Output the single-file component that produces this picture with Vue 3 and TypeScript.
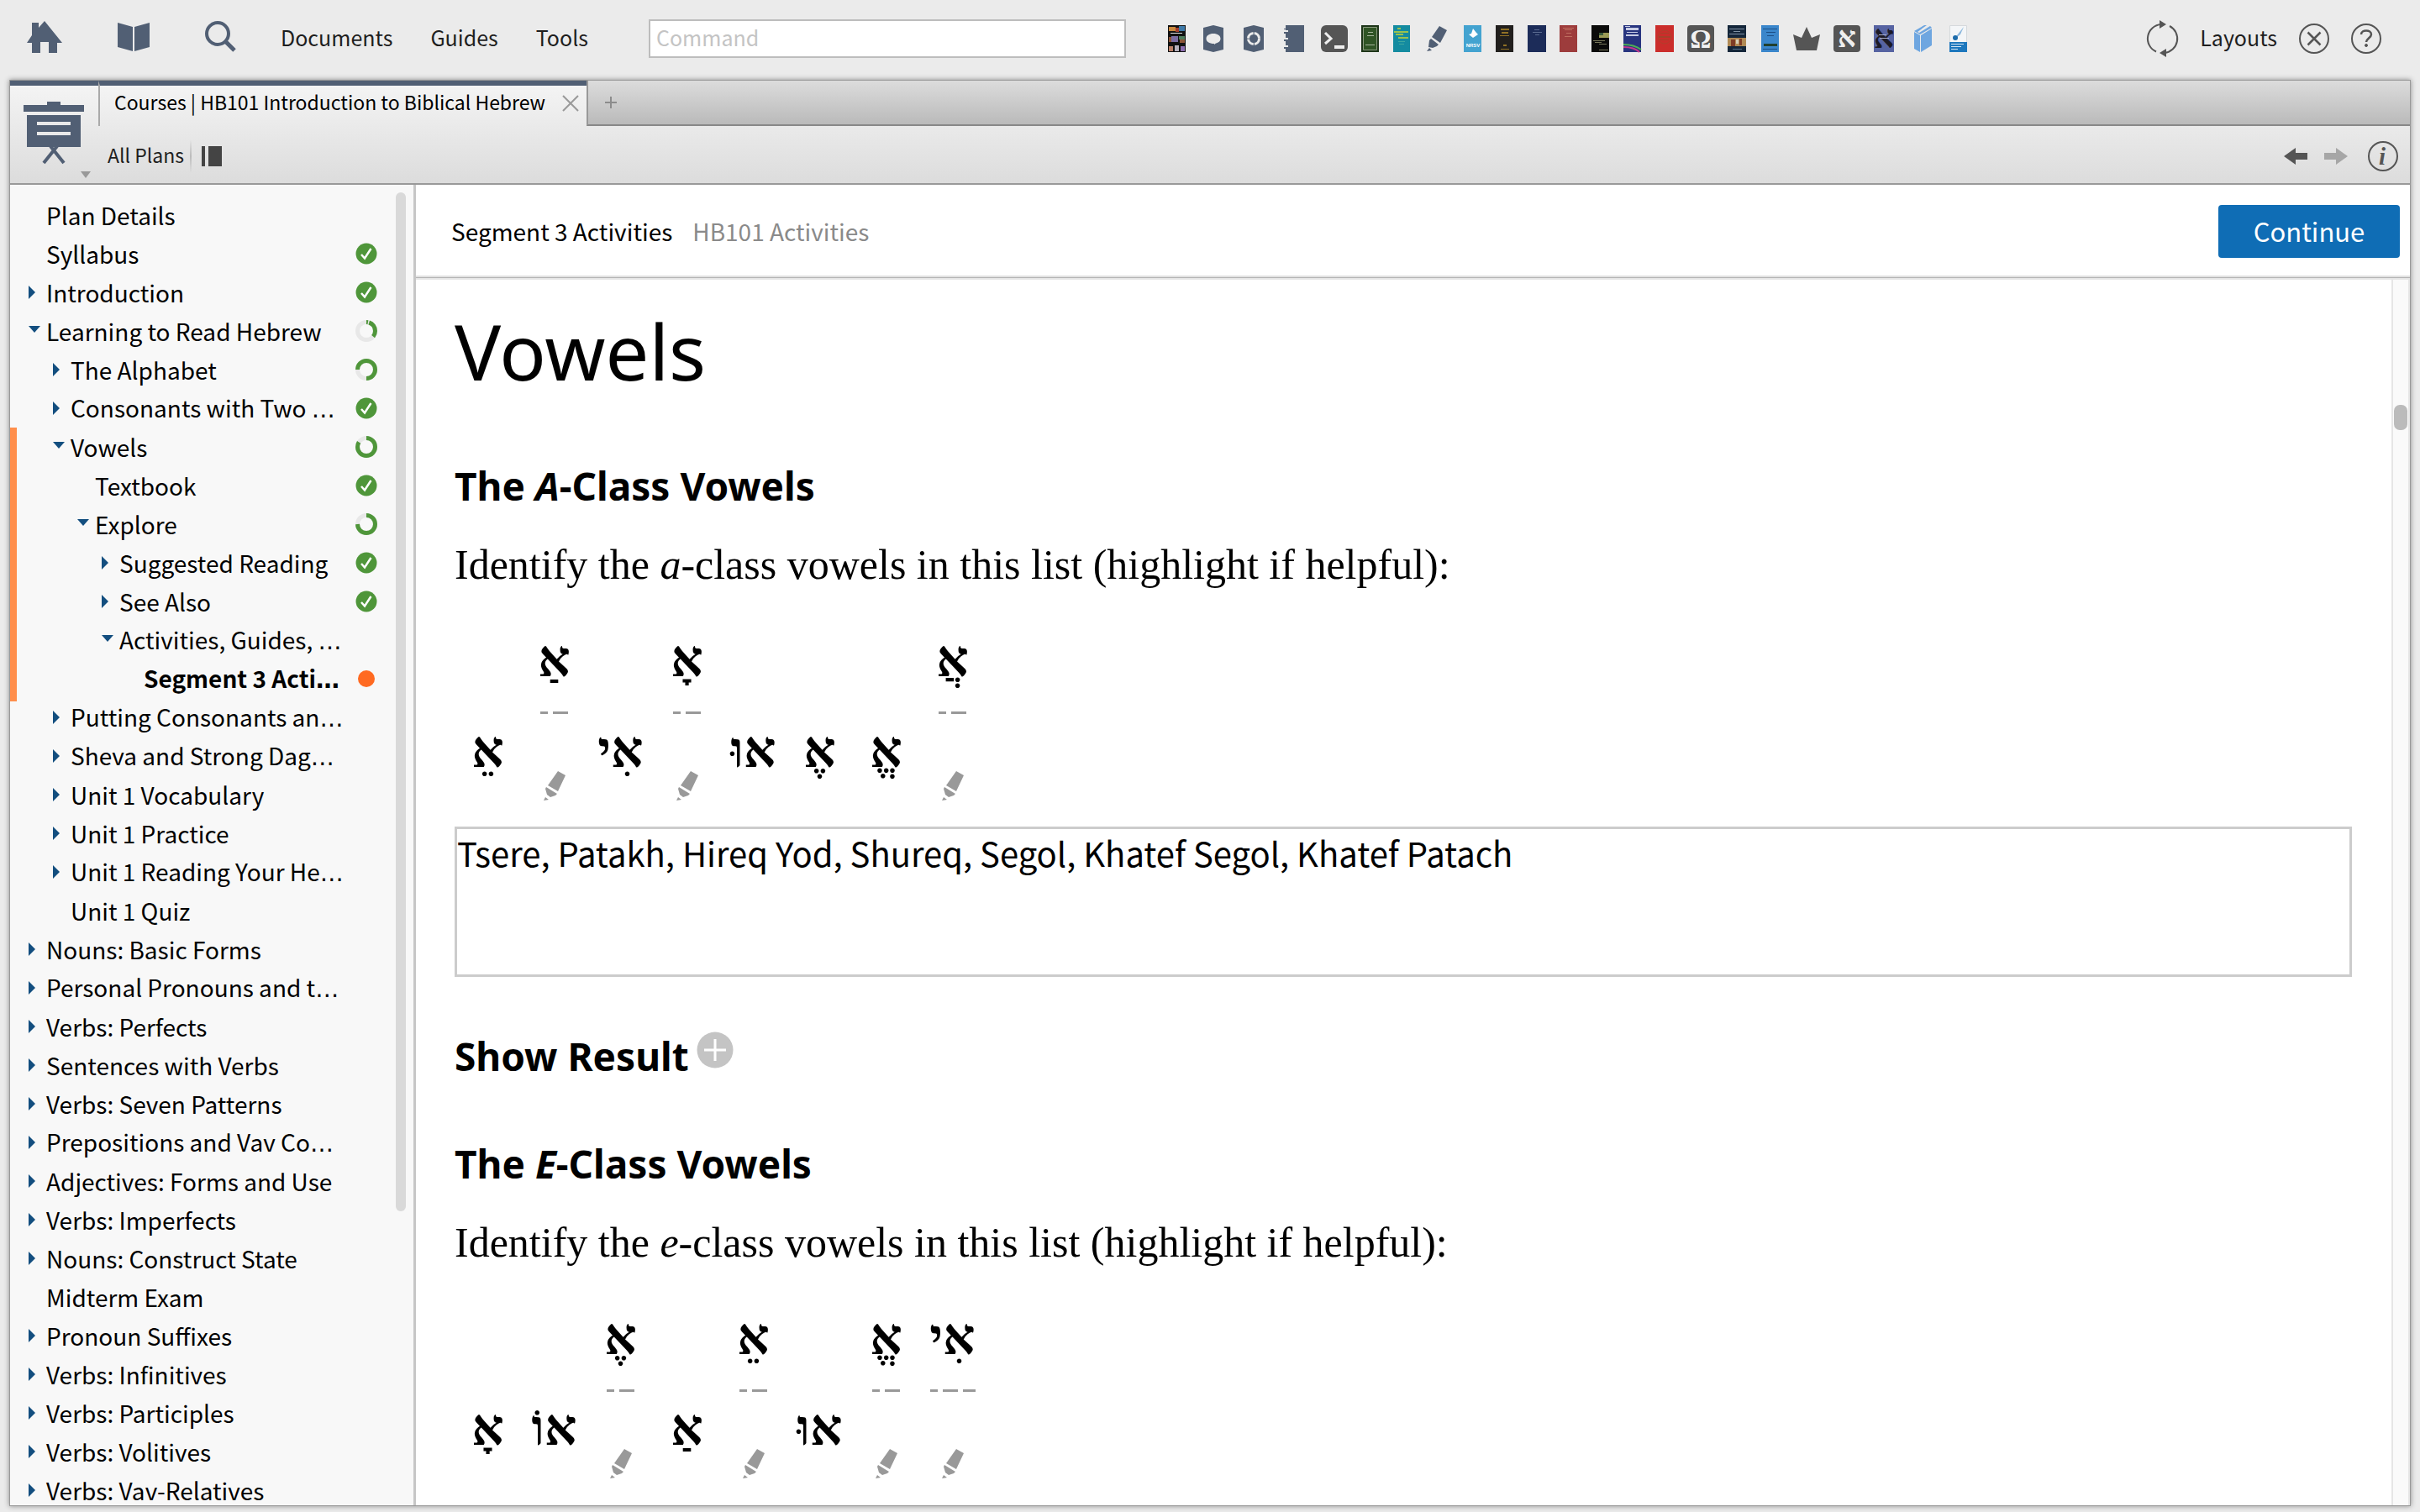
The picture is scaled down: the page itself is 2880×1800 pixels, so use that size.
<script setup lang="ts">
import { ref } from 'vue'

type Status = 'done' | 'ring' | 'current' | ''

interface PlanItem {
  label: string
  depth: number
  arrow?: 'open' | 'closed'
  status?: Status
  arcs?: [number, number][]
  cut?: boolean
  branch?: boolean
}

interface Vowel {
  text: string
  marked?: boolean
  dashes?: number[]
}

const command = ref('')
const answer = ref('Tsere, Patakh, Hireq Yod, Shureq, Segol, Khatef Segol, Khatef Patach')

const plan: PlanItem[] = [
  { label: 'Plan Details', depth: 0 },
  { label: 'Syllabus', depth: 0, status: 'done' },
  { label: 'Introduction', depth: 0, arrow: 'closed', status: 'done' },
  { label: 'Learning to Read Hebrew', depth: 0, arrow: 'open', status: 'ring', arcs: [[0, 3], [5, 31]] },
  { label: 'The Alphabet', depth: 1, arrow: 'closed', status: 'ring', arcs: [[0, 50], [75, 25]] },
  { label: 'Consonants with Two ', depth: 1, arrow: 'closed', status: 'done', cut: true },
  { label: 'Vowels', depth: 1, arrow: 'open', status: 'ring', arcs: [[0, 84]], branch: true },
  { label: 'Textbook', depth: 2, status: 'done', branch: true },
  { label: 'Explore', depth: 2, arrow: 'open', status: 'ring', arcs: [[0, 75]], branch: true },
  { label: 'Suggested Reading', depth: 3, arrow: 'closed', status: 'done', branch: true },
  { label: 'See Also', depth: 3, arrow: 'closed', status: 'done', branch: true },
  { label: 'Activities, Guides, ', depth: 3, arrow: 'open', cut: true, branch: true },
  { label: 'Segment 3 Acti', depth: 4, status: 'current', cut: true, branch: true },
  { label: 'Putting Consonants an', depth: 1, arrow: 'closed', cut: true },
  { label: 'Sheva and Strong Dag', depth: 1, arrow: 'closed', cut: true },
  { label: 'Unit 1 Vocabulary', depth: 1, arrow: 'closed' },
  { label: 'Unit 1 Practice', depth: 1, arrow: 'closed' },
  { label: 'Unit 1 Reading Your He', depth: 1, arrow: 'closed', cut: true },
  { label: 'Unit 1 Quiz', depth: 1 },
  { label: 'Nouns: Basic Forms', depth: 0, arrow: 'closed' },
  { label: 'Personal Pronouns and t', depth: 0, arrow: 'closed', cut: true },
  { label: 'Verbs: Perfects', depth: 0, arrow: 'closed' },
  { label: 'Sentences with Verbs', depth: 0, arrow: 'closed' },
  { label: 'Verbs: Seven Patterns', depth: 0, arrow: 'closed' },
  { label: 'Prepositions and Vav Co', depth: 0, arrow: 'closed', cut: true },
  { label: 'Adjectives: Forms and Use', depth: 0, arrow: 'closed' },
  { label: 'Verbs: Imperfects', depth: 0, arrow: 'closed' },
  { label: 'Nouns: Construct State', depth: 0, arrow: 'closed' },
  { label: 'Midterm Exam', depth: 0 },
  { label: 'Pronoun Suffixes', depth: 0, arrow: 'closed' },
  { label: 'Verbs: Infinitives', depth: 0, arrow: 'closed' },
  { label: 'Verbs: Participles', depth: 0, arrow: 'closed' },
  { label: 'Verbs: Volitives', depth: 0, arrow: 'closed' },
  { label: 'Verbs: Vav-Relatives', depth: 0, arrow: 'closed' },
]

const aVowels: Vowel[] = [
  { text: '\u05D0\u05B5' },
  { text: '\u05D0\u05B7', marked: true, dashes: [9, 18] },
  { text: '\u05D0\u05B4\u05D9' },
  { text: '\u05D0\u05B8', marked: true, dashes: [9, 18] },
  { text: '\u05D0\u05D5\u05BC' },
  { text: '\u05D0\u05B6' },
  { text: '\u05D0\u05B1' },
  { text: '\u05D0\u05B2', marked: true, dashes: [9, 18] },
]

const eVowels: Vowel[] = [
  { text: '\u05D0\u05B8' },
  { text: '\u05D0\u05D5\u05B9' },
  { text: '\u05D0\u05B6', marked: true, dashes: [9, 18] },
  { text: '\u05D0\u05B7' },
  { text: '\u05D0\u05B5', marked: true, dashes: [9, 18] },
  { text: '\u05D0\u05D5\u05BC' },
  { text: '\u05D0\u05B1', marked: true, dashes: [9, 18] },
  { text: '\u05D0\u05B4\u05D9', marked: true, dashes: [9, 18, 15] },
]

const sections = [
  { letter: 'A', lower: 'a', vowels: aVowels, exercise: true },
  { letter: 'E', lower: 'e', vowels: eVowels, exercise: false },
]
</script>

<template>
  <div class="app">
    <header class="topbar">
      <div class="main-icons">
        <button class="plain" aria-label="Home">
          <svg width="42" height="38" viewBox="0 0 42 38"><path fill="#515f74" d="M0 26 6 17V2h8v6l7-8 21 26h-6v12H26V25H16v13H6V26z" /></svg>
        </button>
        <button class="plain" aria-label="Library">
          <svg width="38" height="34" viewBox="0 0 38 34"><path fill="#515f74" d="M0 0 18 5V34L0 29zM20 5 38 0V29L20 34z" /></svg>
        </button>
        <button class="plain" aria-label="Search">
          <svg width="38" height="38" viewBox="0 0 38 38" fill="none" stroke="#515f74"><circle cx="15" cy="15" r="13" stroke-width="4" /><path d="M24 24 35 35" stroke-width="5" /></svg>
        </button>
      </div>
      <nav class="menus">
        <a href="#">Documents</a>
        <a href="#">Guides</a>
        <a href="#">Tools</a>
      </nav>
      <input v-model="command" class="command" type="text" placeholder="Command" aria-label="Command" />
      <div class="shortcuts">
        <svg width="22" height="32" viewBox="0 0 22 32">
          <path fill="#111" d="M0 0h21v32H0z" /><path fill="#c9893e" d="M1 2h8v5H1z" /><path fill="#3d79a8" d="M13 1h7v6h-7z" /><path fill="#a33c2c" d="M9 3h4v5H9z" />
          <path fill="#ddd" d="M3 9h14v1H3z" /><path fill="#7a6ca2" d="M4 13h8v7H4z" /><path fill="#4f7d5c" d="M13 13h7v4h-7z" /><path fill="#8d5436" d="M14 17h6v4h-6zM1 14h3v6H1z" />
          <path fill="#bb8068" d="M1 25h5v6H1z" /><path fill="#b6b1bd" d="M8 24h5v7H8z" /><path fill="#8d6db0" d="M15 25h5v6h-5z" />
        </svg>
        <svg width="32" height="32" viewBox="0 0 32 32"><path fill="#515f74" d="M4 3 16 0 28 3V29L16 32 4 29z" /><path fill="#ebebeb" d="M16 10c5 0 8.500 2.500 8.500 6 0 3-2.500 5-5.500 5.500L17 23v-1C11 22 7.500 19.500 7.500 16S11 10 16 10z" /></svg>
        <svg width="32" height="32" viewBox="0 0 32 32"><path fill="#515f74" d="M4 3 16 0 28 3V29L16 32 4 29z" /><circle cx="16" cy="16" r="6.500" fill="none" stroke="#ebebeb" stroke-width="3" stroke-dasharray="9 1.200" /></svg>
        <svg width="32" height="32" viewBox="0 0 32 32"><path fill="#515f74" d="M6 0h22v32H6v-4H4v-2h5v-2H6v-5H4v-2h5v-2H6v-5H4V8h5V6H6V5H4V4h2z" /></svg>
        <svg width="32" height="32" viewBox="0 0 32 32"><rect width="32" height="32" rx="6" fill="#555" /><path d="M5 9l7 7-7 6" fill="none" stroke="#eee" stroke-width="3" /><path fill="#eee" d="M16 24h12v4H16z" /></svg>
        <svg width="22" height="32" viewBox="0 0 22 32"><path fill="#1d3518" d="M0 0h21v32H0z" /><path fill="#2f5424" stroke="#8a9b7e" d="M2.500 2.500h16v27h-16z" /><path fill="#a5b59b" d="M8 8h6v1H8zM7 12h8v1H7zM5 23h11v1H5z" /></svg>
        <svg width="22" height="32" viewBox="0 0 22 32"><path fill="#148ba0" d="M0 0h20v32H0z" /><path fill="#9bc24d" d="M5 3h4v2H5zM1 7h17v2H1zM3 10h9v2H3zM6 14h12v2H6z" /><path fill="#3fa9a0" d="M6 19h8v1H6zM7 22h6v1H7z" /></svg>
        <svg width="30" height="32" viewBox="0 0 30 32"><path fill="#515f74" d="M17 1 26 6 18 21 8 14zM7 16 16 23 14 25 9 27 4 26 5 18zM5 27 8 30 2 31z" /></svg>
        <svg width="22" height="32" viewBox="0 0 22 32"><path fill="#43a3d0" d="M0 0h21v32H0z" /><path fill="#fff" d="M11 4l4 5 2 2-6 4-5-4 3-1z" /><text x="11" y="26" text-anchor="middle" font-family="Liberation Sans, sans-serif" font-weight="700" font-size="6" fill="#fff">NRSV</text></svg>
        <svg width="22" height="32" viewBox="0 0 22 32"><path fill="#211f1d" d="M0 0h21v32H0z" /><path fill="#907125" d="M6 4h10v2H6zM7 8h8v2H7zM5 12h11v1H5zM9 23h4v2H9zM6 28h10v1H6z" /></svg>
        <svg width="22" height="32" viewBox="0 0 22 32"><path fill="#1c2c59" d="M0 0h22v32H0z" /><path fill="#5a6b90" d="M8 5h6v1H8zM6 8h11v1H6zM9 11h5v1H9z" /></svg>
        <svg width="22" height="32" viewBox="0 0 22 32"><path fill="#9d3c3c" d="M0 0h21v32H0z" /><path fill="#bf6d5f" d="M4 3h13v1H4zM6 5h9v1H6zM8 9h6v1H8zM6 13h9v1H6z" /></svg>
        <svg width="22" height="32" viewBox="0 0 22 32"><path fill="#0b0b0a" d="M0 0h21v32H0z" /><path fill="#9b9a55" d="M9 9h12v6H9z" /><path fill="#3c5a3a" d="M9 9h5v3H9z" /><path fill="#77775a" d="M2 18h14v1H2zM4 20h8v1H4zM9 22h9v1H9zM9 29h11v1H9z" /></svg>
        <svg width="22" height="32" viewBox="0 0 22 32"><path fill="#27347f" d="M0 0h21v32H0z" /><path fill="#c6cbe4" d="M3 3h15v3H3zM4 8h13v1H4zM3 11h15v2H3zM2 1h6v1H2z" /><path fill="none" stroke="#4fae54" stroke-width="2" d="M0 23c7 0 14 1 21 6" /><path fill="none" stroke="#c3378f" stroke-width="2" d="M0 26c7 0 14 1 19 6" /></svg>
        <svg width="22" height="32" viewBox="0 0 22 32"><path fill="#cb2d2b" d="M0 0h22v32H0z" /><circle cx="11" cy="14" r="8" fill="none" stroke="#b0402c" /><path fill="#a8402a" d="M6 9h10v1H6zM4 13h14v2H4zM5 17h11v1H5z" /></svg>
        <svg width="32" height="32" viewBox="0 0 32 32"><rect width="32" height="32" rx="4" fill="#555" /><text x="16" y="27" text-anchor="middle" font-family="Liberation Serif, serif" font-weight="700" font-size="31" fill="#f2f2f2">Ω</text></svg>
        <svg width="24" height="32" viewBox="0 0 24 32"><path fill="#14263a" d="M0 0h22v32H0z" /><path fill="#7f92a5" d="M2 4h18v1H2zM7 7h8v1H7zM2 10h18v1H2z" /><path fill="#b08a55" d="M0 15h22v10H0z" /><path fill="#7e3d26" d="M4 17h5v8H4zM14 16h3v8h-3z" /><path fill="#d8cfb9" d="M10 17h3v5h-3z" /><path fill="#56708a" d="M6 28h11v1H6z" /></svg>
        <svg width="22" height="32" viewBox="0 0 22 32"><path fill="#3a86cb" d="M0 0h21v32H0z" /><path fill="#1c4f86" d="M2 4h17v1H2zM6 8h11v1H6zM7 12h8v1H7zM2 28h17v1H2z" /><path fill="#22402f" d="M3 22h16v3H3z" /></svg>
        <svg width="32" height="32" viewBox="0 0 32 32"><path fill="#555" d="M4 30 0 11 10 15 16 2 22 15 32 11 28 30z" /></svg>
        <svg width="32" height="32" viewBox="0 0 32 32"><rect width="32" height="32" rx="4" fill="#555" /><text x="16" y="26" text-anchor="middle" font-family="Liberation Serif, serif" font-weight="700" font-size="34" fill="#eee">א</text></svg>
        <svg width="24" height="32" viewBox="0 0 24 32"><path fill="#5663a2" d="M0 0h24v32H0z" /><text x="12" y="27" text-anchor="middle" font-family="Liberation Serif, serif" font-weight="700" font-size="38" fill="#1c1a26">א</text><path fill="#a9aecb" d="M6 11h9v1H6zM7 15h11v1H7z" /></svg>
        <svg width="34" height="32" viewBox="0 0 34 32"><path fill="#6ea6e0" d="M8 8 15 12V32L8 28zM16 12 29 4V24L16 32zM8 7 20 0h3L12 8 14 9 27 1 29 3 15 11z" /></svg>
        <svg width="22" height="32" viewBox="0 0 22 32"><path fill="#f4f6f8" stroke="#d5d9dc" d="M.5.5h20v31H.5z" /><path fill="#8cb7dd" d="M17 2 9 12 8 15 13 11z" /><circle cx="7" cy="15" r="3" fill="#1d6cab" /><path fill="#1d77bd" d="M0 20h21v12H0z" /><path fill="#cfe3f2" d="M2 22h15v1H2zM2 25h12v1H2zM2 28h8v1H2z" /></svg>
      </div>
      <div class="right-tools">
        <button class="plain" aria-label="Sync">
          <svg width="36" height="44" viewBox="0 0 36 44"><path d="M10 37.500A17 17 0 0 1 16 5M26 7A17 17 0 0 1 20 39" fill="none" stroke="#555" stroke-width="2" /><path fill="#555" d="M14 0 22 5 14 10zM22 34 14 39 22 44z" /></svg>
        </button>
        <a href="#" class="layouts">Layouts</a>
        <button class="plain" aria-label="Close all">
          <svg width="36" height="36" viewBox="0 0 36 36" fill="none" stroke="#555"><circle cx="18" cy="18" r="17" stroke-width="2" /><path d="M10.500 10.500 25.500 25.500M25.500 10.500 10.500 25.500" stroke-width="2.500" /></svg>
        </button>
        <button class="plain" aria-label="Help">
          <svg width="36" height="36" viewBox="0 0 36 36" fill="none" stroke="#555"><circle cx="18" cy="18" r="17" stroke-width="2" /><path d="M12 13c0-6 12-6 12 0 0 4-6 5-6 9" stroke-width="2.500" /><circle cx="18" cy="26" r="1.500" fill="#555" stroke-width="1" /></svg>
        </button>
      </div>
    </header>

    <div class="panel">
      <div class="panel-head">
        <button class="plain panel-icon" aria-label="Courses menu">
          <svg width="80" height="92" viewBox="0 0 80 92">
            <path fill="#515f74" d="M28 0h16v4h28v8H0V4h28zM4 16h64v38H4z" />
            <path fill="#e9e9e9" d="M16 24h40v4H16zM16 36h40v4H16z" />
            <path fill="none" stroke="#515f74" stroke-width="4" d="M40 53 24 73M32 53 48 73" />
            <path fill="#999" d="M68 83h12l-6 8z" />
          </svg>
        </button>
        <div class="head-rows">
          <div class="tabs">
            <div class="tab">
              <span>Courses | HB101 Introduction to Biblical Hebrew</span>
              <button class="plain" aria-label="Close tab">
                <svg width="20" height="20" viewBox="0 0 20 20"><path d="M1 1 19 19M19 1 1 19" stroke="#999" stroke-width="2" /></svg>
              </button>
            </div>
            <div class="tab-rest">
              <button class="plain" aria-label="New tab">
                <svg width="14" height="14" viewBox="0 0 14 14"><path d="M7 0v14M0 7h14" stroke="#8c8c8c" stroke-width="2" /></svg>
              </button>
            </div>
          </div>
          <div class="tools">
            <a href="#">All Plans</a>
            <i class="sep"></i>
            <button class="plain" aria-label="Toggle sidebar">
              <svg width="24" height="24" viewBox="0 0 24 24"><path fill="#444" d="M0 0h4v24H0zM8 0h16v24H8z" /></svg>
            </button>
            <div class="history">
              <button class="plain" aria-label="Back">
                <svg width="28" height="20" viewBox="0 0 28 20"><path fill="#555" d="M0 10 14 0V6H28V14H14V20z" /></svg>
              </button>
              <button class="plain" aria-label="Forward">
                <svg width="28" height="20" viewBox="0 0 28 20"><path fill="#a6a6a6" d="M28 10 14 0V6H0V14H14V20z" /></svg>
              </button>
              <button class="plain info" aria-label="Information">
                <svg width="36" height="36" viewBox="0 0 36 36"><circle cx="18" cy="18" r="17" fill="none" stroke="#555" stroke-width="2" /><text x="17" y="28" text-anchor="middle" font-family="Liberation Serif, serif" font-style="italic" font-weight="700" font-size="29" fill="#555">i</text></svg>
              </button>
            </div>
          </div>
        </div>
      </div>

      <div class="body">
        <nav class="sidebar" aria-label="Course plan">
          <ul>
            <li v-for="item in plan" :key="item.label" :class="{ branch: item.branch, current: item.status === 'current' }">
              <a href="#" :style="{ paddingLeft: item.depth * 29 + 'px' }">
                <span class="arrow">
                  <svg v-if="item.arrow === 'closed'" width="8" height="16" viewBox="0 0 8 16"><path fill="#134e7f" d="M0 0 8 8 0 16z" /></svg>
                  <svg v-else-if="item.arrow === 'open'" width="14" height="12" viewBox="0 0 14 12"><path fill="#134e7f" d="M0 0H14L7 8z" /></svg>
                </span>
                <span class="label">{{ item.label }}<span v-if="item.cut" class="dots">…</span></span>
              </a>
              <svg v-if="item.status === 'done'" class="state" width="26" height="26" viewBox="0 0 26 26"><circle cx="13" cy="13" r="12.500" fill="#4f963a" /><path d="M7 14l4 4.500L18.500 7" fill="none" stroke="#fff" stroke-width="2.500" /></svg>
              <svg v-else-if="item.status === 'ring'" class="state" width="26" height="26" viewBox="0 0 26 26">
                <circle cx="13" cy="13" r="10.500" fill="none" stroke="#e8e8e8" stroke-width="5" />
                <circle v-for="arc in item.arcs" :key="arc[0]" cx="13" cy="13" r="10.500" fill="none" stroke="#4f963a" stroke-width="5" pathLength="100" :stroke-dasharray="`${arc[1]} 100`" :stroke-dashoffset="-arc[0]" transform="rotate(-90 13 13)" />
              </svg>
              <svg v-else-if="item.status === 'current'" class="state" width="26" height="26" viewBox="0 0 26 26"><circle cx="13" cy="13" r="10" fill="#ff6a21" /></svg>
            </li>
          </ul>
          <div class="side-scroll"></div>
        </nav>

        <main class="main">
          <div class="crumbs">
            <span>Segment 3 Activities</span>
            <span class="muted">HB101 Activities</span>
            <button class="continue">Continue</button>
          </div>
          <div class="reader">
            <article class="content">
              <h1>Vowels</h1>
              <section v-for="s in sections" :key="s.letter">
                <h2>The <em>{{ s.letter }}</em>-Class Vowels</h2>
                <p>Identify the <em>{{ s.lower }}</em>-class vowels in this list (highlight if helpful):</p>
                <div class="vowels">
                  <div v-for="(v, i) in s.vowels" :key="i" class="vowel" :class="{ marked: v.marked }">
                    <span class="glyph" lang="he" dir="rtl">{{ v.text }}</span>
                    <template v-if="v.marked">
                      <span class="dashes"><i v-for="(d, n) in v.dashes" :key="n" :style="{ width: d + 'px' }"></i></span>
                      <svg width="26" height="35" viewBox="0 0 26 35"><path fill="#999" d="M17 0 26 5 17 24 5 17zM3 19 16 27 14 29 8 31 4 28 2 21zM2 31 6 34 0 35z" /></svg>
                    </template>
                  </div>
                </div>
                <template v-if="s.exercise">
                  <textarea v-model="answer" aria-label="Your answer" spellcheck="false"></textarea>
                  <h2 class="result">Show Result
                    <button class="plain" aria-label="Show result">
                      <svg width="44" height="44" viewBox="0 0 44 44"><circle cx="22" cy="22" r="21.500" fill="#c4c4c4" /><path d="M22 9v26M9 22h26" stroke="#fff" stroke-width="3" /></svg>
                    </button>
                  </h2>
                </template>
              </section>
            </article>
            <div class="track"><div class="thumb"></div></div>
          </div>
        </main>
      </div>
    </div>
  </div>
</template>

<style>
body {
  margin: 0;
  background: #ebebeb;
}
</style>

<style scoped>
* {
  box-sizing: border-box;
}

.app {
  display: flex;
  flex-direction: column;
  height: 100vh;
  padding: 0 12px 8px;
  overflow: hidden;
  background: #ebebeb;
  color: #1e1e1e;
  font-family: 'Noto Sans CJK SC', 'Open Sans', sans-serif;
  font-size: 25px;
  line-height: 36px;
}

svg {
  display: block;
  flex: none;
  overflow: visible;
}

a {
  color: inherit;
  text-decoration: none;
}

.plain {
  display: block;
  padding: 0;
  border: 0;
  background: none;
  flex: none;
}

.topbar {
  display: flex;
  flex: none;
  align-items: center;
  height: 96px;
  padding: 0 34px 4px 20px;
}

.main-icons {
  display: flex;
  align-items: center;
  gap: 66px;
  width: 302px;
  padding-bottom: 4px;
}

.menus {
  display: flex;
  gap: 45px;
  width: 438px;
  padding-bottom: 4px;
}

.layouts {
  padding-bottom: 4px;
}

.command {
  width: 568px;
  height: 46px;
  padding: 0 7px 4px;
  border: 2px solid #bdbdbd;
  background: #fff;
  font: inherit;
}

.command::placeholder {
  color: #c4c4c4;
  opacity: 1;
}

.shortcuts {
  display: flex;
  gap: 16px;
  margin-left: 50px;
}

.right-tools {
  display: flex;
  align-items: center;
  gap: 26px;
  margin-left: auto;
}

.panel {
  display: flex;
  flex: 1;
  flex-direction: column;
  min-height: 0;
  background: #fff;
  box-shadow: 0 0 0 1px #999, 0 0 6px 1px #888;
}

.panel-head {
  display: flex;
  flex: none;
  height: 124px;
  border-bottom: 2px solid #999;
  background: linear-gradient(#f5f5f5, #dcdcdc);
}

.panel-icon {
  width: 105px;
  padding: 14px 0 0 16px;
  border-top: 6px solid #515f74;
}

.head-rows {
  flex: 1;
  font-size: 23px;
}

.tabs {
  display: flex;
  height: 54px;
}

.tab {
  display: flex;
  align-items: center;
  gap: 20px;
  padding: 0 9px 10px 17px;
  border-top: 6px solid #515f74;
  border-left: 2px solid #aaa;
  color: #000;
}

.tab .plain {
  margin-top: 4px;
}

.tab-rest {
  display: flex;
  flex: 1;
  align-items: center;
  padding-left: 20px;
  border-bottom: 2px solid #888;
  border-left: 2px solid #999;
  background: linear-gradient(#dcdcdc, #bababa);
}

.tools {
  display: flex;
  align-items: center;
  height: 68px;
  padding: 3px 14px 0 11px;
}

.tools a {
  padding-bottom: 3px;
}

.sep {
  width: 2px;
  height: 40px;
  margin: 0 12px 0 7px;
  background: linear-gradient(transparent, #bbb, transparent);
}

.history {
  display: flex;
  align-items: center;
  gap: 20px;
  margin-left: auto;
}

.info {
  margin-left: 4px;
}

.body {
  display: flex;
  flex: 1;
  min-height: 0;
}

.sidebar {
  display: flex;
  flex: none;
  width: 483px;
  border-right: 3px solid #c6c6c6;
  background: #f8f8f8;
  overflow: hidden;
}

.sidebar ul {
  width: 459px;
  margin: 0;
  padding: 13px 0 0;
  list-style: none;
  color: #000;
  font-size: 28px;
  line-height: 46px;
}

.sidebar li {
  position: relative;
  display: flex;
  align-items: center;
  height: 46px;
  padding: 0 22px;
  white-space: nowrap;
}

.sidebar li a {
  display: flex;
  flex: 1;
  align-items: center;
}

.branch::before {
  position: absolute;
  top: 0;
  bottom: -4px;
  left: 0;
  width: 8px;
  background: #ff8f4c;
  content: '';
}

.current {
  font-weight: 700;
}

.arrow {
  width: 21px;
}

.dots {
  font-family: 'DejaVu Sans', sans-serif;
}

.side-scroll {
  width: 12px;
  height: 1213px;
  margin-top: 9px;
  border-radius: 6px;
  background: #d9d9d9;
}

.main {
  display: flex;
  flex: 1;
  flex-direction: column;
  min-width: 0;
}

.crumbs {
  display: flex;
  flex: none;
  align-items: center;
  gap: 24px;
  height: 111px;
  padding: 0 12px 0 42px;
  border-bottom: 1px solid #b4b4b4;
  box-shadow: 0 2px #e6e6e6, inset 0 -2px #e2e2e2;
  color: #000;
  font-size: 28px;
}

.muted {
  color: #8a8a8a;
}

.continue {
  width: 216px;
  height: 63px;
  margin-left: auto;
  padding: 0;
  border: 0;
  border-radius: 4px;
  background: #0f6db5;
  color: #fff;
  font: inherit;
  font-size: 31px;
}

.reader {
  display: flex;
  flex: 1;
  min-height: 0;
  margin-top: 2px;
}

.content {
  flex: 1;
  padding: 21px 47px 0 46px;
  overflow: hidden;
  color: #000;
}

h1,
h2 {
  margin: 0;
  font-family: 'Noto Sans', 'Open Sans', sans-serif;
}

h1 {
  font-size: 92px;
  font-weight: 400;
  line-height: 128px;
}

h2 {
  margin-top: 64px;
  font-size: 46px;
  font-weight: 700;
  line-height: 64px;
}

p {
  margin: 30px 0 0;
  font-family: 'Liberation Serif', serif;
  font-size: 50px;
  line-height: 64px;
}

.vowels {
  display: flex;
  height: 239px;
  margin-top: 41px;
}

.vowel {
  display: flex;
  flex-direction: column;
  align-items: center;
  width: 79px;
  padding-top: 108px;
}

.marked {
  padding-top: 0;
}

.glyph {
  font-family: 'Liberation Serif', serif;
  font-size: 60px;
  font-weight: 700;
  line-height: 80px;
}

.dashes {
  display: flex;
  gap: 6px;
  margin: 22px 0 68px;
}

.dashes i {
  height: 3px;
  background: #999;
}

textarea {
  display: block;
  width: 100%;
  height: 179px;
  padding: 0;
  border: 3px solid #ccc;
  background: #fff;
  color: #000;
  font-family: 'Noto Sans CJK SC', 'Open Sans', sans-serif;
  font-size: 40px;
  line-height: 56px;
  resize: none;
}

.result {
  display: flex;
  gap: 9px;
  align-items: flex-start;
  margin-top: 62px;
}

.result .plain {
  margin-top: 3px;
}

.track {
  width: 22px;
  padding: 149px 1px 0;
  border-right: 2px solid #e6e6e6;
  border-left: 2px solid #e6e6e6;
  background: #fafafa;
}

.thumb {
  width: 16px;
  height: 30px;
  border-radius: 7px;
  background: #bbb;
}
</style>
